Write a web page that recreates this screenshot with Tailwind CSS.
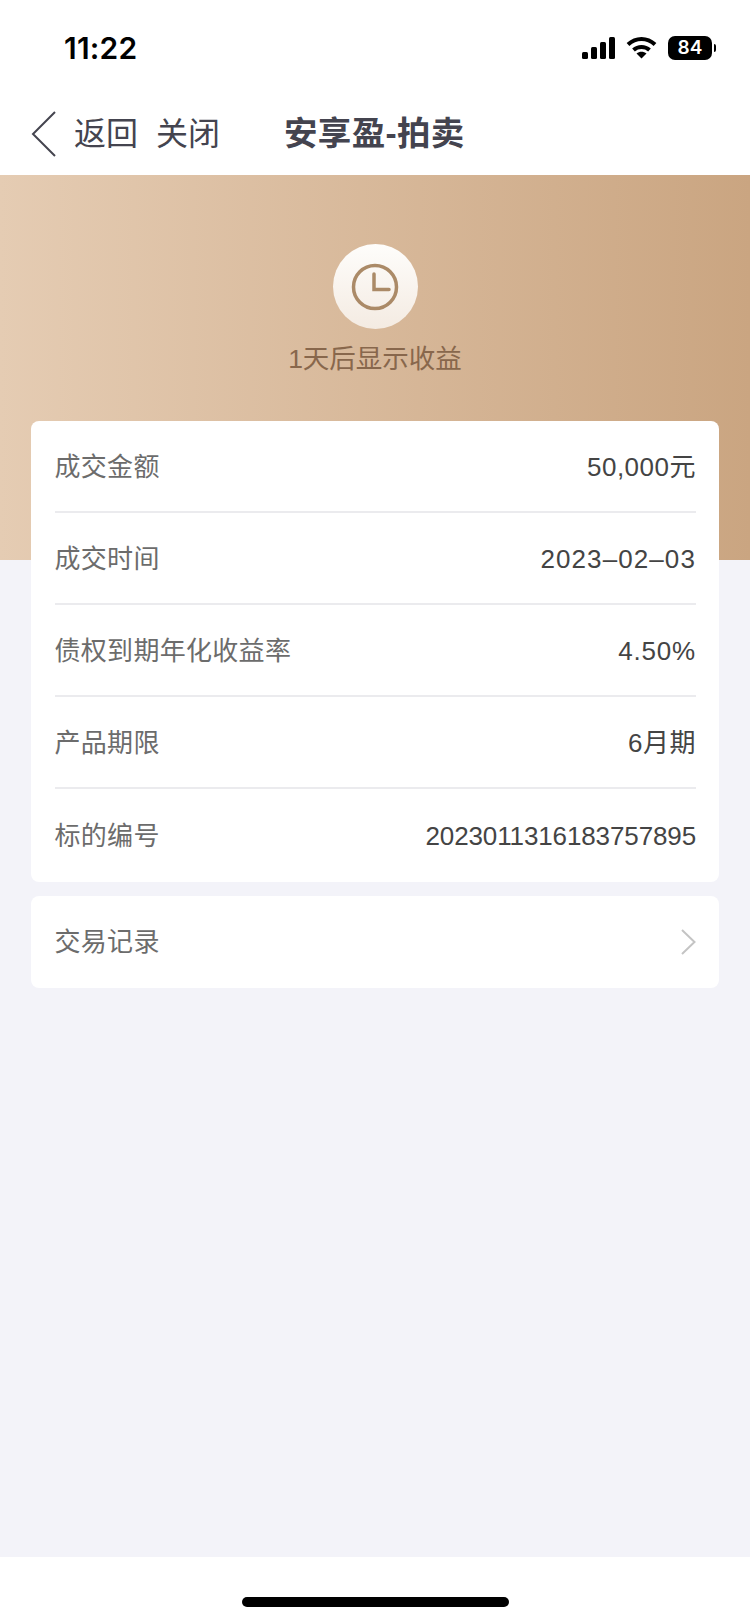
<!DOCTYPE html>
<html lang="zh">
<head>
<meta charset="utf-8">
<script src="https://cdn.jsdelivr.net/npm/@tailwindcss/browser@4"></script>
</head>
<body class="m-0">
<div class="w-[750px] h-[1623px] flex flex-col bg-[#f3f3f9] overflow-hidden font-['Liberation_Sans','Noto_Sans_CJK_SC',sans-serif]">
  <div class="h-[175px] bg-white shrink-0 flex flex-col">
    <div class="h-[94px] flex items-center justify-between pl-[64px] pr-[34px] pt-[1px]">
      <span class="text-[30px] font-semibold text-black font-['Inter',sans-serif] leading-none tracking-[0.2px]">11:22</span>
      <div class="flex items-center gap-[11px]">
        <svg width="33" height="22" viewBox="0 0 33 22" fill="#000"><rect x="0" y="15" width="6" height="7" rx="1.5"/><rect x="9" y="10" width="6" height="12" rx="1.5"/><rect x="18" y="5" width="6" height="17" rx="1.5"/><rect x="27" y="0" width="6" height="22" rx="1.5"/></svg>
        <svg width="31" height="23" viewBox="0 0 31 23" fill="none" stroke="#000" stroke-width="4"><path d="M2 8.5C10 1 21 1 29 8.5"/><path d="M7.5 14C12 10 19 10 23.5 14"/><path d="M15.5 22.5L10.5 17.5C13.5 15.3 17.5 15.3 20.5 17.5Z" fill="#000" stroke="none"/></svg>
        <div class="flex items-center gap-[2px]">
          <div class="w-[44px] h-[24px] rounded-[7px] bg-black text-white text-[19px] font-semibold leading-[24px] text-center font-['Inter',sans-serif]">84</div>
          <div class="w-[2px] h-[8px] rounded-r-full bg-black"></div>
        </div>
      </div>
    </div>
    <div class="flex-1 flex items-center pl-[31px] pb-[2px]">
      <svg class="mr-[18px]" width="25" height="46" viewBox="0 0 25 46" fill="none" stroke="#44444f" stroke-width="2"><path d="M24 1L2 23L24 45"/></svg>
      <span class="text-[32px] leading-none text-[#44444f] mr-[18px]">返回</span>
      <span class="text-[32px] leading-none text-[#44444f] mr-[64px]">关闭</span>
      <span class="text-[33.5px] leading-none font-bold text-[#44444f] tracking-[0.3px]">安享盈-拍卖</span>
    </div>
  </div>
  <div class="h-[385px] shrink-0 bg-gradient-to-r from-[#e5ccb3] to-[#caa581] flex flex-col items-center pt-[69px]">
    <div class="w-[85px] h-[85px] rounded-full bg-gradient-to-b from-[#fefdfb] to-[#f4ebe2] flex items-center justify-center">
      <svg width="48" height="48" viewBox="0 0 48 48" fill="none" stroke="#ab8a67" stroke-width="3.5"><circle cx="24" cy="24" r="21.5"/><path d="M23 11V26.5H38" stroke-linecap="round"/></svg>
    </div>
    <div class="mt-[13px] text-[26.5px] leading-[34px] text-[#88674c]">1天后显示收益</div>
  </div>
  <div class="mx-[31px] mt-[-139px] bg-white rounded-[8px] pl-[23.5px] pr-[23px] text-[26px] shrink-0">
    <div class="h-[92px] pt-[2px] flex items-center justify-between border-b-2 border-[#ebebee]"><span class="tracking-[0.3px] text-[#6c6c6c]">成交金额</span><span class="text-[#444444] tracking-[0.5px]">50,000元</span></div>
    <div class="h-[92px] pt-[2px] flex items-center justify-between border-b-2 border-[#ebebee]"><span class="tracking-[0.3px] text-[#6c6c6c]">成交时间</span><span class="text-[#444444] tracking-[1.1px]">2023–02–03</span></div>
    <div class="h-[92px] pt-[2px] flex items-center justify-between border-b-2 border-[#ebebee]"><span class="tracking-[0.3px] text-[#6c6c6c]">债权到期年化收益率</span><span class="text-[#444444] tracking-[0.8px]">4.50%</span></div>
    <div class="h-[92px] pt-[2px] flex items-center justify-between border-b-2 border-[#ebebee]"><span class="tracking-[0.3px] text-[#6c6c6c]">产品期限</span><span class="text-[#444444] tracking-[0.5px]">6月期</span></div>
    <div class="h-[93px] pt-[2px] flex items-center justify-between"><span class="tracking-[0.3px] text-[#6c6c6c]">标的编号</span><span class="text-[#444444] tracking-[-0.12px]">2023011316183757895</span></div>
  </div>
  <div class="mx-[31px] mt-[14px] h-[92px] bg-white rounded-[8px] pl-[23.5px] pr-[23px] text-[26px] flex items-center justify-between shrink-0">
    <span class="tracking-[0.3px] text-[#6c6c6c]">交易记录</span>
    <svg width="15" height="26" viewBox="0 0 15 26" fill="none" stroke="#c4c4c4" stroke-width="2"><path d="M1 1L13.5 13L1 25"/></svg>
  </div>
  <div class="flex-1"></div>
  <div class="h-[66px] bg-white shrink-0 flex justify-center pt-[40px]">
    <div class="w-[267px] h-[10px] rounded-full bg-black"></div>
  </div>
</div>
</body>
</html>
